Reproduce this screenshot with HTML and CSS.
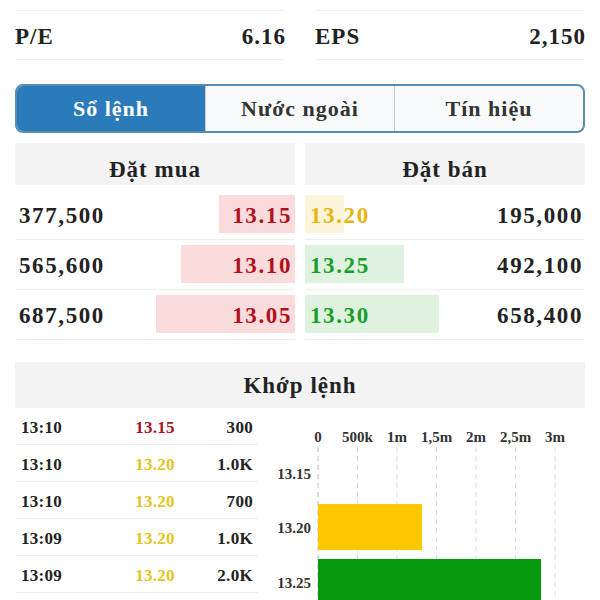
FILE: index.html
```html
<!DOCTYPE html>
<html lang="vi">
<head>
    <meta charset="UTF-8">
    <meta name="viewport" content="width=device-width, initial-scale=1.0">
    <title>Sổ lệnh</title>
    <link rel="stylesheet" href="styles.css">
</head>
<body>
    <div class="page">
        <div class="stats">
            <div class="stat"><span>P/E</span><span>6.16</span></div>
            <div class="stat"><span>EPS</span><span>2,150</span></div>
        </div>

        <div class="tabs">
            <div class="tab active">Sổ lệnh</div>
            <div class="tab">Nước ngoài</div>
            <div class="tab">Tín hiệu</div>
        </div>

        <div class="book">
            <div class="side buy">
                <div class="side-head">Đặt mua</div>
                <div class="row">
                    <span class="vol">377,500</span>
                    <span class="bar" style="width: 27.2%"></span>
                    <span class="price red">13.15</span>
                </div>
                <div class="row">
                    <span class="vol">565,600</span>
                    <span class="bar" style="width: 40.8%"></span>
                    <span class="price red">13.10</span>
                </div>
                <div class="row">
                    <span class="vol">687,500</span>
                    <span class="bar" style="width: 49.6%"></span>
                    <span class="price red">13.05</span>
                </div>
            </div>
            <div class="side sell">
                <div class="side-head">Đặt bán</div>
                <div class="row">
                    <span class="bar ref" style="width: 14%"></span>
                    <span class="price yellow">13.20</span>
                    <span class="vol">195,000</span>
                </div>
                <div class="row">
                    <span class="bar" style="width: 35.4%"></span>
                    <span class="price green">13.25</span>
                    <span class="vol">492,100</span>
                </div>
                <div class="row">
                    <span class="bar" style="width: 47.9%"></span>
                    <span class="price green">13.30</span>
                    <span class="vol">658,400</span>
                </div>
            </div>
        </div>

        <div class="match">
            <div class="match-head">Khớp lệnh</div>
            <div class="match-body">
                <div class="ticks">
                    <div class="tick"><span>13:10</span><span class="t-red">13.15</span><span>300</span></div>
                    <div class="tick"><span>13:10</span><span class="t-yellow">13.20</span><span>1.0K</span></div>
                    <div class="tick"><span>13:10</span><span class="t-yellow">13.20</span><span>700</span></div>
                    <div class="tick"><span>13:09</span><span class="t-yellow">13.20</span><span>1.0K</span></div>
                    <div class="tick"><span>13:09</span><span class="t-yellow">13.20</span><span>2.0K</span></div>
                </div>

                <!-- khối lượng theo giá, 500k = 39.5px -->
                <svg class="chart" width="323" height="200" viewBox="0 0 323 200">
                    <g class="grid">
                        <line x1="56" y1="39" x2="56" y2="200" class="axis"/>
                        <line x1="95.5" y1="39" x2="95.5" y2="200"/>
                        <line x1="135" y1="39" x2="135" y2="200"/>
                        <line x1="174.5" y1="39" x2="174.5" y2="200"/>
                        <line x1="214" y1="39" x2="214" y2="200"/>
                        <line x1="253.5" y1="39" x2="253.5" y2="200"/>
                        <line x1="293" y1="39" x2="293" y2="200"/>
                    </g>
                    <g class="xlab">
                        <text x="56" y="34">0</text>
                        <text x="95.5" y="34">500k</text>
                        <text x="135" y="34">1m</text>
                        <text x="174.5" y="34">1,5m</text>
                        <text x="214" y="34">2m</text>
                        <text x="253.5" y="34">2,5m</text>
                        <text x="293" y="34">3m</text>
                    </g>
                    <g class="ylab">
                        <text x="49" y="71">13.15</text>
                        <text x="49" y="125">13.20</text>
                        <text x="49" y="180">13.25</text>
                    </g>
                    <rect x="56" y="96" width="104" height="46" fill="#ffc700"/>
                    <rect x="56" y="151" width="223" height="49" fill="#079a0e"/>
                </svg>
            </div>
        </div>
    </div>
</body>
</html>
```

FILE: styles.css
```css
* {
    box-sizing: border-box;
}
body {
    margin: 0;
    font-family: "Liberation Serif", "Times New Roman", serif;
    font-weight: bold;
    color: #222;
    background: #fff;
    overflow: hidden;
}
.page {
    padding: 10px 15px 0;
}

/* chỉ số */
.stats {
    display: grid;
    grid-template-columns: 1fr 1fr;
    column-gap: 30px;
}
.stat {
    display: flex;
    justify-content: space-between;
    align-items: center;
    height: 50px;
    padding-top: 4px;
    border-top: 1px solid #eeeeee;
    border-bottom: 1px solid #eeeeee;
    font-size: 23px;
    letter-spacing: 1px;
}
.stat span:last-child {
    margin-right: -1px;
}

/* tabs */
.tabs {
    display: flex;
    margin-top: 24px;
    height: 49px;
    border: 2px solid #5a8cb3;
    border-radius: 8px;
    overflow: hidden;
    background: #f9fafb;
}
.tab {
    flex: 1;
    display: flex;
    align-items: center;
    justify-content: center;
    font-size: 22px;
    letter-spacing: 1px;
    color: #333;
    border-left: 1.5px solid #c9ced3;
}
.tab:first-child {
    border-left: none;
}
.tab.active {
    background: #2b7bbb;
    color: #fff;
}

/* sổ lệnh */
.book {
    display: grid;
    grid-template-columns: 1fr 1fr;
    column-gap: 10px;
    margin-top: 10px;
}
.side-head {
    height: 42px;
    padding-top: 12px;
    display: flex;
    align-items: center;
    justify-content: center;
    background: #f3f3f3;
    font-size: 23px;
    letter-spacing: 1px;
    margin-bottom: 5px;
}
.row {
    position: relative;
    display: flex;
    justify-content: space-between;
    align-items: center;
    height: 50px;
    padding-top: 2px;
    border-bottom: 1px solid #efefef;
    font-size: 23px;
    letter-spacing: 1.6px;
}
.row .bar {
    position: absolute;
    top: 5px;
    bottom: 6px;
}
.buy .bar {
    right: 0;
    background: #fbdcdc;
}
.sell .bar {
    left: 0;
    background: #dff2df;
}
.sell .bar.ref {
    background: #fdf4dc;
}
.row .price,
.row .vol {
    position: relative;
}
.buy .vol {
    padding-left: 4px;
}
.buy .price {
    padding-right: 3px;
}
.sell .price {
    padding-left: 5px;
}
.sell .vol {
    padding-right: 2px;
}
.red {
    color: #b0111c;
}
.green {
    color: #17a02a;
}
.yellow {
    color: #e7b50d;
}

/* khớp lệnh */
.match {
    margin-top: 22px;
}
.match-head {
    height: 46px;
    padding-top: 2px;
    display: flex;
    align-items: center;
    justify-content: center;
    background: #f3f3f3;
    font-size: 23px;
    letter-spacing: 1px;
}
.match-body {
    display: flex;
}
.ticks {
    width: 243px;
    margin-right: 4px;
}
.tick {
    display: grid;
    grid-template-columns: 100px 80px 1fr;
    align-items: center;
    height: 37px;
    padding-top: 3px;
    border-bottom: 1px solid #efefef;
    font-size: 17px;
    letter-spacing: 0.3px;
}
.tick span:first-child {
    padding-left: 6px;
}
.tick span:nth-child(2) {
    text-align: center;
}
.tick span:last-child {
    text-align: right;
    padding-right: 5px;
}
.t-red {
    color: #a3151f;
}
.t-yellow {
    color: #e3c41c;
}

.chart {
    display: block;
}
.chart .grid line {
    stroke: #dcdcdc;
    stroke-width: 1;
    stroke-dasharray: 5 4;
}
.chart .grid line.axis {
    stroke: #b9bcc2;
}
.chart text {
    font-family: "Liberation Serif", serif;
    font-weight: bold;
    font-size: 15px;
    fill: #333;
}
.chart .xlab text {
    text-anchor: middle;
}
.chart .ylab text {
    text-anchor: end;
}
```
